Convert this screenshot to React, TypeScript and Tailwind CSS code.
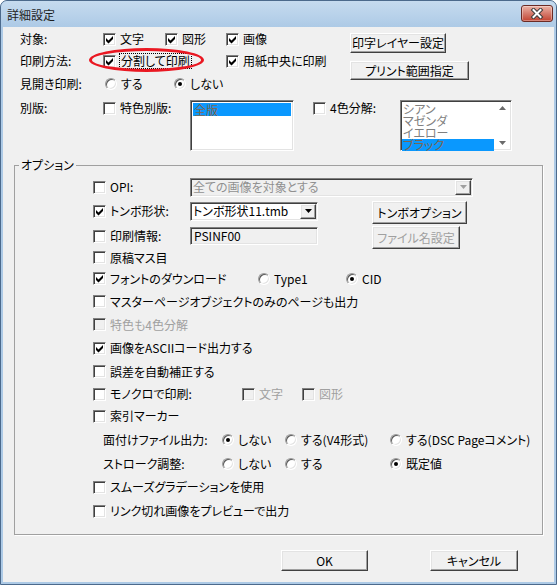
import React from 'react';

const sunken =
  'border border-t-[#808080] border-l-[#808080] border-b-white border-r-white shadow-[inset_1px_1px_0_#404040,inset_-1px_-1px_0_#e3e3e3]';
const raised =
  'bg-[#f0f0f0] border border-t-white border-l-white border-r-[#404040] border-b-[#404040] shadow-[inset_-1px_-1px_0_#a0a0a0,inset_1px_1px_0_#e3e3e3]';

function Check({ checked, disabled }: { checked?: boolean; disabled?: boolean }) {
  return (
    <span className={`relative inline-block w-[13px] h-[13px] shrink-0 ${sunken} ${disabled ? 'bg-[#f0f0f0]' : 'bg-white'}`}>
      {checked && (
        <svg width="11" height="11" viewBox="0 0 11 11" className="absolute left-0 top-0">
          <path d="M2 4 L4.5 6.5 L9 2 L9 5 L4.5 9.5 L2 7 Z" fill="#000" />
        </svg>
      )}
    </span>
  );
}

function Radio({ checked }: { checked?: boolean }) {
  return (
    <span className="inline-flex items-center justify-center w-[12px] h-[12px] shrink-0 rounded-full bg-white border border-t-[#9a9a9a] border-l-[#9a9a9a] border-b-white border-r-white shadow-[inset_1px_1px_0_#5a5a5a,inset_-1px_-1px_0_#e3e3e3]">
      {checked && <span className="w-[4px] h-[4px] rounded-full bg-black" />}
    </span>
  );
}

function CheckItem({
  label,
  checked,
  disabled,
  className = '',
}: {
  label: string;
  checked?: boolean;
  disabled?: boolean;
  className?: string;
}) {
  return (
    <span className={`inline-flex items-center gap-[4px] whitespace-nowrap ${className}`}>
      <Check checked={checked} disabled={disabled} />
      <span className={disabled ? 'text-[#a0a0a0]' : ''}>{label}</span>
    </span>
  );
}

function RadioItem({ label, checked, className = '' }: { label: string; checked?: boolean; className?: string }) {
  return (
    <span className={`inline-flex items-center gap-[4px] whitespace-nowrap ${className}`}>
      <Radio checked={checked} />
      <span>{label}</span>
    </span>
  );
}

function Btn({ children, disabled, className = '' }: { children: React.ReactNode; disabled?: boolean; className?: string }) {
  return (
    <button
      type="button"
      className={`flex items-center justify-center whitespace-nowrap ${raised} ${disabled ? 'text-[#a0a0a0]' : 'text-black'} ${className}`}
    >
      {children}
    </button>
  );
}

function Arrow({ dir, color }: { dir: 'up' | 'down'; color: string }) {
  return (
    <svg width="7" height="4" viewBox="0 0 7 4">
      <path d={dir === 'down' ? 'M0 0 H7 L3.5 4 Z' : 'M0 4 H7 L3.5 0 Z'} fill={color} />
    </svg>
  );
}

function Combo({ text, disabled, className = '' }: { text: string; disabled?: boolean; className?: string }) {
  return (
    <div className={`flex items-stretch p-[1px] ${sunken} ${disabled ? 'bg-[#f0f0f0] text-[#909090]' : 'bg-white'} ${className}`}>
      <div className="flex-1 flex items-center pl-[1px] overflow-hidden whitespace-nowrap">{text}</div>
      <div className={`w-[16px] flex items-center justify-center ${raised}`}>
        <Arrow dir="down" color={disabled ? '#a0a0a0' : '#000'} />
      </div>
    </div>
  );
}

export default function App() {
  return (
    <div className="w-[557px] h-[585px] flex flex-col border border-[#4c6a8c] rounded-t-[7px] bg-[#adcae6] font-['Noto_Sans_CJK_JP','Noto_Sans',sans-serif] [font-feature-settings:'palt'] text-[12px] leading-[14px] text-black overflow-hidden">
      {/* title bar */}
      <div className="h-[26px] flex items-start justify-between pl-[6px] pr-[3px] bg-linear-to-b from-[#c6dbef] to-[#adcae6] rounded-t-[6px]">
        <span className="mt-[7px] text-[#1e1e1e]">詳細設定</span>
        <div className="mt-[4px] w-[32px] h-[17px] rounded-[3px] border border-[#6b2a24] bg-linear-to-b from-[#ecb3a6] via-[#d57a6c] to-[#c2402f] flex items-center justify-center shadow-[inset_0_0_0_1px_rgba(255,255,255,0.35)]">
          <svg width="14" height="11" viewBox="0 0 14 11">
            <path d="M3.5 2 L10.5 9 M10.5 2 L3.5 9" stroke="#3d3d3d" strokeWidth="4" strokeLinecap="square" />
            <path d="M3.5 2 L10.5 9 M10.5 2 L3.5 9" stroke="#fff" strokeWidth="2" strokeLinecap="square" />
          </svg>
        </div>
      </div>

      {/* client */}
      <div className="mx-[2px] mb-[2px] flex-1 flex flex-col bg-[#f0f0f0]">
        {/* top section */}
        <div className="flex pl-[17px] pt-[1px]">
          <div className="w-[330px] flex flex-col">
            <div className="h-[22px] flex items-center">
              <span className="w-[83px]">対象:</span>
              <CheckItem className="w-[62px]" checked label="文字" />
              <CheckItem className="w-[61px]" checked label="図形" />
              <CheckItem checked label="画像" />
            </div>
            <div className="relative h-[22px] flex items-center">
              <span className="w-[83px]">印刷方法:</span>
              <span className="w-[123px] inline-flex items-center gap-[3px] whitespace-nowrap">
                <Check checked />
                <span className="border border-dotted border-black px-[1px] leading-[14px]">分割して印刷</span>
              </span>
              <CheckItem checked label="用紙中央に印刷" />
              <div className="absolute left-[69px] top-[-2px] w-[115px] h-[24px] rounded-[50%] border-[3px] border-[#ea1822]" />
            </div>
            <div className="h-[22px] mt-[1px] flex items-center">
              <span className="w-[85px]">見開き印刷:</span>
              <RadioItem className="w-[69px]" label="する" />
              <RadioItem checked label="しない" />
            </div>
          </div>
          <div className="flex flex-col items-start pt-[5px]">
            <Btn className="w-[96px] h-[20px]">印字レイヤー設定</Btn>
            <Btn className="mt-[8px] w-[119px] h-[19px]">プリント範囲指定</Btn>
          </div>
        </div>

        {/* separations */}
        <div className="flex items-start pl-[17px] mt-[5px]">
          <span className="w-[83px] pt-[1px]">別版:</span>
          <CheckItem className="w-[87px] h-[16px]" label="特色別版:" />
          <div className={`w-[104px] h-[51px] p-[2px] bg-white ${sunken}`}>
            <div className="h-[13px] leading-[13px] px-[1px] bg-[#0a98fe] text-[#7d6650]">全版</div>
          </div>
          <CheckItem className="ml-[19px] w-[87px] h-[16px]" label="4色分解:" />
          <div className={`w-[112px] h-[51px] p-[1px] flex bg-white ${sunken}`}>
            <div className="flex-1 flex flex-col pt-[1px] text-[#808080]">
              <div className="h-[12px] leading-[12px] px-[1px]">シアン</div>
              <div className="h-[12px] leading-[12px] px-[1px]">マゼンダ</div>
              <div className="h-[12px] leading-[12px] px-[1px]">イエロー</div>
              <div className="h-[12px] leading-[12px] px-[1px] bg-[#0a98fe] text-[#7d6650]">ブラック</div>
            </div>
            <div className="w-[16px] flex flex-col items-center justify-between py-[4px]">
              <Arrow dir="up" color="#6a6a6a" />
              <Arrow dir="down" color="#6a6a6a" />
            </div>
          </div>
        </div>

        {/* options group */}
        <fieldset className="mt-[7px] mx-[11px] border border-[#a0a0a0] shadow-[1px_1px_0_white]">
          <legend className="ml-[4px] px-[2px] leading-[14px]">オプション</legend>
          <div className="flex flex-col pl-[78px] pt-[4px] pb-[11px]">
            <div className="h-[22px] flex items-center">
              <CheckItem className="w-[97px]" label="OPI:" />
              <Combo disabled className="w-[283px] h-[19px]" text="全ての画像を対象とする" />
            </div>
            <div className="h-[26px] flex items-center">
              <CheckItem className="w-[97px]" checked label="トンボ形状:" />
              <Combo className="w-[128px] h-[19px]" text="トンボ形状11.tmb" />
              <Btn className="ml-[54px] w-[95px] h-[23px] mt-[3px]">トンボオプション</Btn>
            </div>
            <div className="h-[24px] flex items-center">
              <CheckItem className="w-[97px]" label="印刷情報:" />
              <div className={`w-[128px] h-[18px] flex items-center pl-[3px] bg-[#f0f0f0] ${sunken}`}>PSINF00</div>
              <Btn disabled className="ml-[54px] w-[88px] h-[23px] mt-[3px]">ファイル名設定</Btn>
            </div>
            <div className="h-[19px] flex items-center">
              <CheckItem label="原稿マス目" />
            </div>
            <div className="h-[23px] flex items-center">
              <CheckItem className="w-[165px]" checked label="フォントのダウンロード" />
              <RadioItem className="w-[88px]" label="Type1" />
              <RadioItem checked label="CID" />
            </div>
            <div className="h-[23px] flex items-center">
              <CheckItem label="マスターページオブジェクトのみのページも出力" />
            </div>
            <div className="h-[23px] flex items-center">
              <CheckItem disabled label="特色も4色分解" />
            </div>
            <div className="h-[24px] flex items-center">
              <CheckItem checked label="画像をASCIIコード出力する" />
            </div>
            <div className="h-[23px] flex items-center">
              <CheckItem label="誤差を自動補正する" />
            </div>
            <div className="h-[22px] flex items-center">
              <CheckItem className="w-[149px]" label="モノクロで印刷:" />
              <CheckItem className="w-[60px]" disabled label="文字" />
              <CheckItem disabled label="図形" />
            </div>
            <div className="h-[22px] flex items-center">
              <CheckItem label="索引マーカー" />
            </div>
            <div className="h-[25px] flex items-center">
              <span className="w-[129px] pl-[10px] whitespace-nowrap">面付けファイル出力:</span>
              <RadioItem className="w-[63px]" checked label="しない" />
              <RadioItem className="w-[105px]" label="する(V4形式)" />
              <RadioItem label="する(DSC Pageコメント)" />
            </div>
            <div className="h-[23px] flex items-center">
              <span className="w-[129px] pl-[10px] whitespace-nowrap">ストローク調整:</span>
              <RadioItem className="w-[63px]" label="しない" />
              <RadioItem className="w-[105px]" label="する" />
              <RadioItem checked label="既定値" />
            </div>
            <div className="h-[24px] flex items-center">
              <CheckItem label="スムーズグラデーションを使用" />
            </div>
            <div className="h-[24px] flex items-center">
              <CheckItem label="リンク切れ画像をプレビューで出力" />
            </div>
          </div>
        </fieldset>

        {/* dialog buttons */}
        <div className="flex pl-[278px] mt-[15px] gap-[62px]">
          <Btn className="w-[87px] h-[21px]">OK</Btn>
          <Btn className="w-[88px] h-[21px]">キャンセル</Btn>
        </div>
      </div>
    </div>
  );
}
